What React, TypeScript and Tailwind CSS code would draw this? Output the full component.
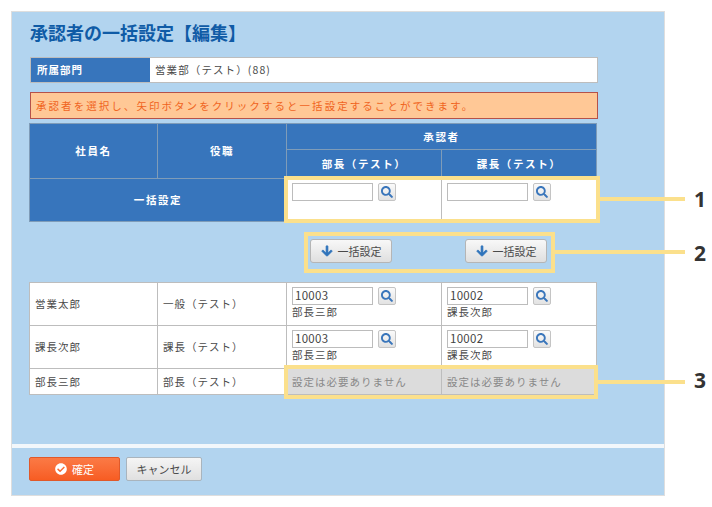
import React from 'react';
import { FaArrowDown, FaCheckCircle, FaSearch } from 'react-icons/fa';

const font = { fontFamily: '"Noto Sans CJK JP", "Liberation Sans", sans-serif' };

function SearchButton() {
  return (
    <button className="flex h-[18px] w-[18px] shrink-0 items-center justify-center rounded-[2px] border border-[#c4c4c4] bg-gradient-to-b from-[#fafafa] to-[#e2e2e2]">
      <FaSearch className="h-[12px] w-[12px] text-[#3a76bb]" />
    </button>
  );
}

function PickerCell({ code, name }: { code?: string; name?: string }) {
  return (
    <td className="h-[43px] border border-[#bdbdbd] bg-white px-[5px] pt-[4px] align-top">
      <div className="flex items-start gap-[5px]">
        <div className="flex h-[18px] w-[81px] items-center border border-[#bcbcbc] bg-white pl-[2px] text-[11.5px] leading-none tracking-[0.3px] text-[#444]">
          {code}
        </div>
        <SearchButton />
      </div>
      {name && <div className="text-[10.5px] leading-[14px] tracking-[1px] text-[#4a4a4a]">{name}</div>}
    </td>
  );
}

function BulkButton() {
  return (
    <button className="flex h-[24px] w-[82px] items-center justify-center gap-[5px] rounded-[3px] border border-[#b5b5b5] bg-gradient-to-b from-[#f8f8f8] to-[#dfdfdf] text-[11px] text-[#4a4a4a]">
      <FaArrowDown className="h-[12px] w-[12px] text-[#2f74bb]" stroke="currentColor" strokeWidth={30} />
      一括設定
    </button>
  );
}

const head = 'border border-[#7f9cb8] bg-[#3775bc] text-center text-[10.5px] font-bold tracking-[1.6px] text-white';
const bodyCell = 'border border-[#bdbdbd] bg-white px-[5px] text-[10.5px] tracking-[1px] text-[#4a4a4a]';
const noneCell = 'h-[26px] border border-[#bdbdbd] bg-[#dcdcdc] px-[5px] text-[10.5px] tracking-[1px] text-[#888]';

function Cols() {
  return (
    <colgroup>
      <col className="w-[128px]" />
      <col className="w-[129px]" />
      <col className="w-[155px]" />
      <col className="w-[155px]" />
    </colgroup>
  );
}

function Highlight({ className }: { className: string }) {
  return <div className={`absolute border-[4px] border-[#fbe08c] ${className}`} />;
}

export default function App() {
  return (
    <div className="relative h-[507px] w-[712px] overflow-hidden bg-white" style={font}>
      <div className="absolute left-[11px] top-[11px] flex h-[485px] w-[654px] flex-col border border-[#dedede] bg-[#b2d4ef]">
        <div className="flex-1 pl-[18px] pt-[8px]">
          <h1 className="text-[18px] font-bold leading-[24px] text-[#0f5ba6]">承認者の一括設定【編集】</h1>

          <div className="mt-[13px] flex h-[26px] w-[568px] border border-[#bdbdbd] bg-white">
            <div className="flex w-[119px] items-center bg-[#3775bc] pl-[6px] text-[10.5px] font-bold tracking-[1px] text-white">所属部門</div>
            <div className="flex items-center pl-[5px] text-[10.5px] tracking-[1.1px] text-[#4a4a4a]">営業部（テスト）(88)</div>
          </div>

          <div className="mt-[9px] flex h-[27px] w-[568px] items-center border border-[#b5524a] bg-[#ffc896] pl-[5px] text-[10.5px] tracking-[2.05px] text-[#f0641e]">
            承認者を選択し、矢印ボタンをクリックすると一括設定することができます。
          </div>

          <table className="-ml-[1px] mt-[4px] w-[567px] table-fixed border-collapse">
            <Cols />
            <tbody>
              <tr className="h-[26px]">
                <td rowSpan={2} className={head}>社員名</td>
                <td rowSpan={2} className={head}>役職</td>
                <td colSpan={2} className={head}>承認者</td>
              </tr>
              <tr className="h-[29px]">
                <td className={head}>部長（テスト）</td>
                <td className={head}>課長（テスト）</td>
              </tr>
              <tr>
                <td colSpan={2} className={head}>一括設定</td>
                <PickerCell />
                <PickerCell />
              </tr>
            </tbody>
          </table>

          <div className="mt-[17px] flex w-[567px] pl-[280px]">
            <BulkButton />
            <div className="w-[73px]" />
            <BulkButton />
          </div>

          <table className="-ml-[1px] mt-[19px] w-[567px] table-fixed border-collapse">
            <Cols />
            <tbody>
              <tr>
                <td className={bodyCell}>営業太郎</td>
                <td className={bodyCell}>一般（テスト）</td>
                <PickerCell code="10003" name="部長三郎" />
                <PickerCell code="10002" name="課長次郎" />
              </tr>
              <tr>
                <td className={bodyCell}>課長次郎</td>
                <td className={bodyCell}>課長（テスト）</td>
                <PickerCell code="10003" name="部長三郎" />
                <PickerCell code="10002" name="課長次郎" />
              </tr>
              <tr>
                <td className={bodyCell}>部長三郎</td>
                <td className={bodyCell}>部長（テスト）</td>
                <td className={noneCell}>設定は必要ありません</td>
                <td className={noneCell}>設定は必要ありません</td>
              </tr>
            </tbody>
          </table>
        </div>

        <div className="h-[4px] bg-[#f2f7fb]" />
        <div className="flex h-[47px] items-start gap-[6px] pl-[17px] pt-[9px]">
          <button className="flex h-[24px] w-[91px] items-center justify-center gap-[5px] rounded-[2px] border border-[#e0592a] bg-gradient-to-b from-[#fb7a45] to-[#f75c22] text-[11px] text-white">
            <FaCheckCircle className="h-[12px] w-[12px] text-white" />
            確定
          </button>
          <button className="h-[24px] w-[76px] rounded-[2px] border border-[#a9b4bd] bg-gradient-to-b from-[#f5f5f5] to-[#e0e0e0] text-[11px] text-[#4a4a4a]">
            キャンセル
          </button>
        </div>
      </div>

      <Highlight className="left-[284px] top-[176px] h-[47px] w-[316px]" />
      <Highlight className="left-[304px] top-[232px] h-[41px] w-[251px]" />
      <Highlight className="left-[284px] top-[365px] h-[34px] w-[314px]" />

      <div className="absolute left-[600px] top-[197px] h-[4px] w-[85px] bg-[#fbe08c]" />
      <div className="absolute left-[555px] top-[250px] h-[4px] w-[130px] bg-[#fbe08c]" />
      <div className="absolute left-[598px] top-[380px] h-[4px] w-[87px] bg-[#fbe08c]" />

      <div className="absolute left-[694px] top-[187px] text-[21px] font-bold leading-[24px] text-[#333]" style={{ fontFamily: '"Open Sans", sans-serif' }}>1</div>
      <div className="absolute left-[694px] top-[241px] text-[21px] font-bold leading-[24px] text-[#333]" style={{ fontFamily: '"Open Sans", sans-serif' }}>2</div>
      <div className="absolute left-[694px] top-[368px] text-[21px] font-bold leading-[24px] text-[#333]" style={{ fontFamily: '"Open Sans", sans-serif' }}>3</div>
    </div>
  );
}
